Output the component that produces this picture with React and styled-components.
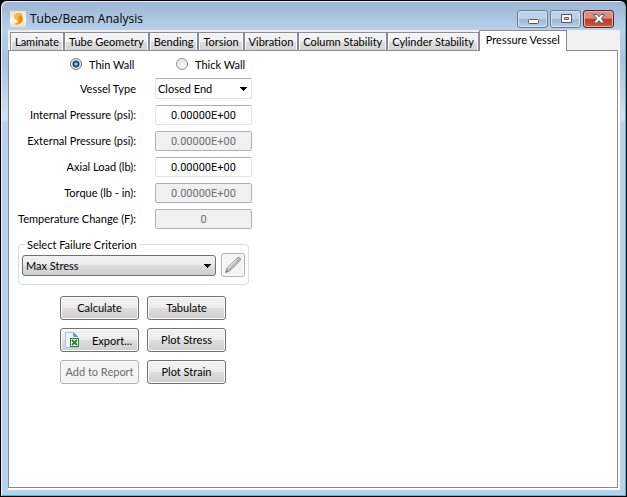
import React, { useState } from 'react'
import styled, { createGlobalStyle, css } from 'styled-components';

const TABS = [
  'Laminate',
  'Tube Geometry',
  'Bending',
  'Torsion',
  'Vibration',
  'Column Stability',
  'Cylinder Stability',
  'Pressure Vessel',
];

const FIELDS = [
  { id: 'internal', label: 'Internal Pressure (psi):', value: '0.00000E+00' },
  { id: 'external', label: 'External Pressure (psi):', value: '0.00000E+00', disabled: true },
  { id: 'axial', label: 'Axial Load (lb):', value: '0.00000E+00' },
  { id: 'torque', label: 'Torque (lb - in):', value: '0.00000E+00', disabled: true },
  { id: 'temperature', label: 'Temperature Change (F):', value: '0', disabled: true },
];

const AppIcon = () => (
  <svg width="16" height="16" viewBox="0 0 16 16" aria-hidden="true">
    <defs>
      <linearGradient id="appBg" x1="0" y1="0" x2="0" y2="1">
        <stop offset="0" stopColor="#f3e0c4" />
        <stop offset="0.6" stopColor="#fbf6ee" />
        <stop offset="1" stopColor="#e9dccb" />
      </linearGradient>
    </defs>
    <rect width="16" height="16" fill="url(#appBg)" />
    <path d="M4 4l4-2 4 1 0 2 1 4-2 3-4 2-3-1 4-2-1-2-3-2z" fill="#f9a61c" />
    <path d="M4 4l4-2 4 1-4 2-1 4-3-2z" fill="#fbb93a" />
    <path d="M9 5l3 0 1 4-2 3-3 1 1-3z" fill="#e88c14" />
  </svg>
)

const Arrow = () => (
  <svg width="7" height="4" viewBox="0 0 7 4" shapeRendering="crispEdges" aria-hidden="true">
    <path d="M0 0h7v1H6v1H5v1H4v1H3V3H2V2H1V1H0z" fill="#000" />
  </svg>
)

const PencilIcon = () => (
  <svg width="18" height="18" viewBox="0 0 18 18" aria-hidden="true">
    <path d="M1.5 16.5l1.3-4L13 2.2q1-1 2-.8 1.4.4 1.5 1.8 0 .8-.7 1.6L5.5 15.2z" fill="#b9b9b9" stroke="#999" />
    <path d="M4 12.5L13.5 3" stroke="#dedede" strokeWidth="1.5" />
    <path d="M1.5 16.5l1-2.6 1.6 1.6z" fill="#777" />
    <path d="M12 3l3 3" stroke="#999" />
  </svg>
)

const ExcelIcon = () => (
  <svg width="15" height="16" viewBox="0 0 15 16" aria-hidden="true">
    <path d="M.5.5h8l4 4v11H.5z" fill="#eef4fb" stroke="#a9c3e2" />
    <path d="M8.5.5v4h4z" fill="#5f9bd8" stroke="#6b9fd4" />
    <rect x="5" y="6" width="9" height="9" fill="#2b8a34" />
    <rect x="6" y="7" width="7" height="7" fill="#fff" />
    <path d="M7 8l5 5M12 8l-5 5" stroke="#2b8a34" strokeWidth="2" />
  </svg>
)

const App = () => {
  const [tab, setTab] = useState('Pressure Vessel')
  const [wall, setWall] = useState('thin')
  return (<>
    <GlobalStyle />
    <Window>
      <TitleBar>
        <AppIcon />
        <Title>Tube/Beam Analysis</Title>
        <Caption aria-label="Minimize">
          <svg width="12" height="12" viewBox="0 0 12 12">
            <rect x="1.5" y="6.5" width="10" height="4" rx="1" fill="#fff" stroke="#535666" />
          </svg>
        </Caption>
        <Caption aria-label="Maximize">
          <svg width="12" height="12" viewBox="0 0 12 12">
            <path d="M1.5 1.5h10v8h-10zM4.5 4.5v2h4v-2z" fill="#fff" fillRule="evenodd" stroke="#535666" />
          </svg>
        </Caption>
        <Caption $close aria-label="Close">
          <svg width="12" height="12" viewBox="0 0 12 12">
            <path d="M.5 1.5H4l2 2.3 2-2.3h3.5L8.3 5.5l3.2 4.5H8L6 7.6 4 10H.5l3.2-4.5z" fill="#fff" stroke="#535666" />
          </svg>
        </Caption>
      </TitleBar>
      <Client>
        <TabStrip role="tablist">
          {TABS.map((name) => (
            <Tab key={name} type="button" role="tab" aria-selected={tab === name} $active={tab === name} onClick={() => setTab(name)}>
              {name}
            </Tab>
          ))}
        </TabStrip>
        <Panel role="tabpanel">
          <RadioRow>
            <RadioLabel>
              <Radio name="wall" checked={wall === 'thin'} onChange={() => setWall('thin')} />
              Thin Wall
            </RadioLabel>
            <RadioLabel>
              <Radio name="wall" checked={wall === 'thick'} onChange={() => setWall('thick')} />
              Thick Wall
            </RadioLabel>
          </RadioRow>

          <Form>
            <Label htmlFor="vessel">Vessel Type</Label>
            <SelectBox>
              <Select id="vessel" $flat defaultValue="Closed End">
                <option>Closed End</option>
                <option>Open End</option>
              </Select>
              <Arrow />
            </SelectBox>
            {FIELDS.map((field) => (
              <React.Fragment key={field.id}>
                <Label htmlFor={field.id}>{field.label}</Label>
                <Input id={field.id} defaultValue={field.value} disabled={field.disabled} />
              </React.Fragment>
            ))}
          </Form>

          <Group>
            <Legend>Select Failure Criterion</Legend>
            <SelectBox>
              <Select aria-label="Failure criterion" defaultValue="Max Stress">
                <option>Max Stress</option>
                <option>Max Strain</option>
              </Select>
              <Arrow />
            </SelectBox>
            <IconButton disabled aria-label="Edit criterion"><PencilIcon /></IconButton>
          </Group>

          <Actions>
            <Button>Calculate</Button>
            <Button>Tabulate</Button>
            <Button $icon><ExcelIcon /><span>Export...</span></Button>
            <Button>Plot Stress</Button>
            <Button disabled>Add to Report</Button>
            <Button>Plot Strain</Button>
          </Actions>
        </Panel>
      </Client>
    </Window>
  </>)
}

export default App

const GlobalStyle = createGlobalStyle`
* {
  box-sizing: border-box;
}
body {
  margin: 0;
  background: #000;
  font-family: Lato, "Liberation Sans", Arial, sans-serif;
  font-size: 11px;
  color: #000;
}
button, input, select {
  font: inherit;
  color: inherit;
  margin: 0;
}
`;

const Window = styled.div`
  display: flex;
  flex-direction: column;
  min-height: 100vh;
  padding: 0 6px 6px;
  border: 1px solid #000;
  border-radius: 7px 7px 0 0;
  background: linear-gradient(#9ab4d2, #b9d1ea 29px, #a9c3df 60px, #d3e1f1 118px, #b9d1ea 121px);
  box-shadow: inset 1px 1px #e8f1fa, inset -1px -1px #35c3dc;
`;

const TitleBar = styled.header`
  display: flex;
  align-items: center;
  gap: 2px;
  height: 29px;
  padding: 6px 6px 0 3px;
`;

const Title = styled.h1`
  flex: 1;
  margin: 0 0 0 2px;
  font-family: "Open Sans", "Noto Sans", sans-serif;
  font-size: 12px;
  font-weight: 400;
`;

const Caption = styled.button`
  display: flex;
  align-items: center;
  justify-content: center;
  width: 31px;
  height: 18px;
  padding: 0;
  border: 1px solid #66798f;
  border-radius: 3px;
  box-shadow: inset 0 0 0 1px #d5e3f2;
  background: linear-gradient(#bdd0e5 50%, #9bb7d4 50%, #b6cfe8);
  ${({ $close }) => $close && css`
    border-color: #5b2028;
    box-shadow: inset 0 0 0 1px #e3b1a8;
    background: linear-gradient(#dc8d80 45%, #bb3a25 50%, #cd5a3f);
  `}
`;

const Client = styled.main`
  display: flex;
  flex: 1;
  flex-direction: column;
  margin-left: 1px;
  padding: 0 2px 2px 0;
  background: linear-gradient(#f0f0f0 20px, #fff 20px);
`;

const TabStrip = styled.div`
  display: flex;
  align-items: flex-end;
  height: 21px;
  padding-left: 2px;
`;

const Tab = styled.button`
  height: 19px;
  padding: 0 4px 2px;
  border: 1px solid #898c95;
  border-bottom-width: 0;
  box-shadow: inset 0 0 0 1px #fafafa;
  background: linear-gradient(#f2f2f2 50%, #dddddd 50%, #d2d2d2);
  white-space: nowrap;
  ${({ $active }) => $active && css`
    position: relative;
    height: 21px;
    padding: 0 6px 4px;
    box-shadow: none;
    background: #fff;
  `}
`;

const Panel = styled.section`
  flex: 1;
  margin-top: -1px;
  border: 1px solid #898c95;
  background: #fff;
`;

const RadioRow = styled.div`
  display: grid;
  grid-template-columns: 106px 1fr;
  height: 27px;
  padding-left: 61px;
`;

const RadioLabel = styled.label`
  display: flex;
  align-items: center;
  gap: 7px;
  height: 26px;
`;

const Radio = styled.input.attrs({ type: 'radio' })`
  appearance: none;
  width: 12px;
  height: 12px;
  border: 1px solid #8e8f8f;
  border-radius: 50%;
  background: radial-gradient(circle at 60% 60%, #fafafa, #d0d3d6);
  box-shadow: inset 0 0 0 1px #f4f4f4;
  &:checked {
    border-color: #6d7376;
    background: radial-gradient(circle, #6fd0f0 0 1px, #1d6f9c 2px, #0b3450 3px, #dfe6ea 4px);
  }
`;

const Form = styled.div`
  display: grid;
  grid-template-columns: 127px 97px;
  grid-auto-rows: 21px;
  align-items: center;
  gap: 5px 19px;
`;

const Label = styled.label`
  text-align: right;
  white-space: nowrap;
`;

const Input = styled.input`
  align-self: end;
  width: 100%;
  height: 20px;
  padding: 0;
  border: 1px solid #e2e3ea;
  border-top-color: #abadb3;
  border-radius: 2px;
  font-family: Roboto, "Liberation Sans", sans-serif;
  text-align: center;
  background: #fff;
  &:disabled {
    border-color: #afafaf;
    background: #f0f0f0;
    color: #6d6d6d;
  }
`;

const SelectBox = styled.div`
  position: relative;
  flex: 1;
  svg {
    position: absolute;
    top: 9px;
    right: 5px;
    pointer-events: none;
  }
`;

const Select = styled.select`
  display: block;
  appearance: none;
  width: 100%;
  height: 21px;
  padding: 0 16px 0 3px;
  border: 1px solid #707070;
  border-radius: 3px;
  background: linear-gradient(#f2f2f2, #ebebeb 50%, #dddddd 50%, #cfcfcf);
  ${({ $flat }) => $flat && css`
    padding-left: 2px;
    border-color: #abadb3 #e2e3ea #e2e3ea;
    border-radius: 2px;
    background: #fff;
  `}
`;

const Group = styled.fieldset`
  display: flex;
  align-items: center;
  gap: 5px;
  width: 231px;
  margin: 9px 0 0 9px;
  padding: 2px 3px 7px;
  border: 1px solid #d5dfe5;
  border-radius: 4px;
`;

const Legend = styled.legend`
  margin-left: 3px;
  padding: 0 2px;
  line-height: 13px;
`;

const Button = styled.button`
  display: flex;
  align-items: center;
  justify-content: center;
  height: 24px;
  padding: 0 0 2px;
  border: 1px solid #707070;
  border-radius: 3px;
  box-shadow: inset 0 0 0 1px #fbfbfb;
  background: linear-gradient(#f2f2f2, #ebebeb 50%, #dddddd 50%, #cfcfcf);
  white-space: nowrap;
  &:disabled {
    border-color: #adb2b5;
    background: #f4f4f4;
    color: #6d6d6d;
  }
  ${({ $icon }) => $icon && css`
    justify-content: space-between;
    padding: 0 6px 0 4px;
  `}
`;

const IconButton = styled(Button)`
  width: 24px;
  padding: 0;
`;

const Actions = styled.div`
  display: grid;
  grid-template-columns: 79px 79px;
  gap: 8px;
  margin: 11px 0 0 51px;
`;
